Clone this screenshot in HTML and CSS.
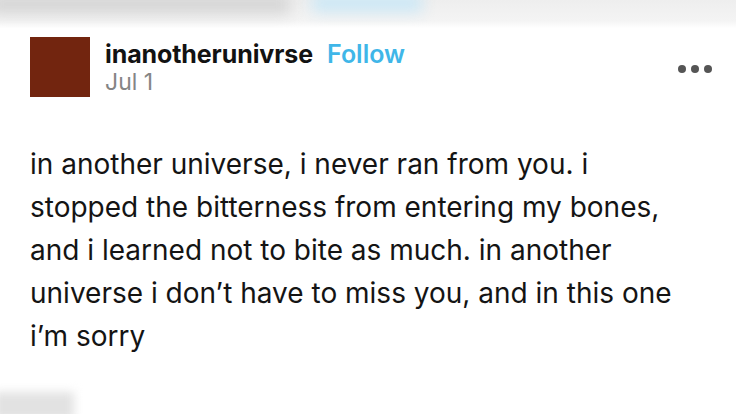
FILE: index.html
```html
<!DOCTYPE html>
<html>
<head>
<meta charset="utf-8">
<link rel="stylesheet" href="styles.css">
</head>
<body>
<div class="page">
  <div class="topstrip">
    <div class="blur-gray"></div>
    <div class="blur-blue"></div>
  </div>
  <div class="post">
    <div class="header">
      <div class="avatar"></div>
      <div class="meta">
        <div class="nameline"><span class="name">inanotherunivrse</span><span class="follow">Follow</span></div>
        <div class="date">Jul 1</div>
      </div>
      <div class="more"><span></span><span></span><span></span></div>
    </div>
    <p class="body">in another universe, i never ran from you. i<br>stopped the bitterness from entering my bones,<br>and i learned not to bite as much. in another<br>universe i don’t have to miss you, and in this one<br>i’m sorry</p>
  </div>
  <div class="bottomstrip"><div class="blur-bottom"></div></div>
</div>
</body>
</html>
```

FILE: styles.css
```css
html, body {
  margin: 0;
  padding: 0;
  background: #ffffff;
}
.page {
  width: 736px;
  height: 414px;
  overflow: hidden;
  display: flex;
  flex-direction: column;
  font-family: "Inter", "Liberation Sans", sans-serif;
  color: #121212;
}
.topstrip {
  height: 28px;
  display: flex;
  align-items: flex-start;
  background: linear-gradient(to bottom, #eeeeee 0%, #f4f4f4 75%, #ffffff 100%);
  overflow: hidden;
}
.blur-gray {
  width: 300px;
  height: 20px;
  margin-top: -6px;
  margin-left: -10px;
  background: #d6d6d6;
  filter: blur(7px);
}
.blur-blue {
  width: 110px;
  height: 18px;
  margin-top: -6px;
  margin-left: 22px;
  background: #cce8f6;
  filter: blur(7px);
}
.post {
  padding: 9px 24px 0 30px;
  flex: 1;
}
.header {
  display: flex;
  align-items: flex-start;
}
.avatar {
  width: 60px;
  height: 60px;
  background: #72250f;
  flex: none;
}
.meta {
  margin-left: 15px;
  flex: 1;
  padding-top: 3px;
}
.nameline {
  display: flex;
  align-items: baseline;
  line-height: 28px;
}
.name {
  font-weight: 700;
  font-size: 25px;
  letter-spacing: -0.1px;
  color: #121212;
}
.follow {
  margin-left: 14px;
  font-weight: 600;
  font-size: 25px;
  color: #3fb6e8;
}
.date {
  font-size: 23px;
  line-height: 28px;
  color: #858585;
  margin-top: 0;
}
.more {
  display: flex;
  gap: 5px;
  margin-top: 28px;
}
.more span {
  width: 8px;
  height: 8px;
  border-radius: 50%;
  background: #555555;
}
.body {
  margin: 46px 0 0 0;
  font-size: 28px;
  line-height: 43px;
  color: #141414;
}
.bottomstrip {
  height: 30px;
  display: flex;
  align-items: flex-end;
}
.blur-bottom {
  width: 80px;
  height: 28px;
  margin-left: -6px;
  margin-bottom: -6px;
  background: #e2e2e2;
  filter: blur(5px);
}
```
